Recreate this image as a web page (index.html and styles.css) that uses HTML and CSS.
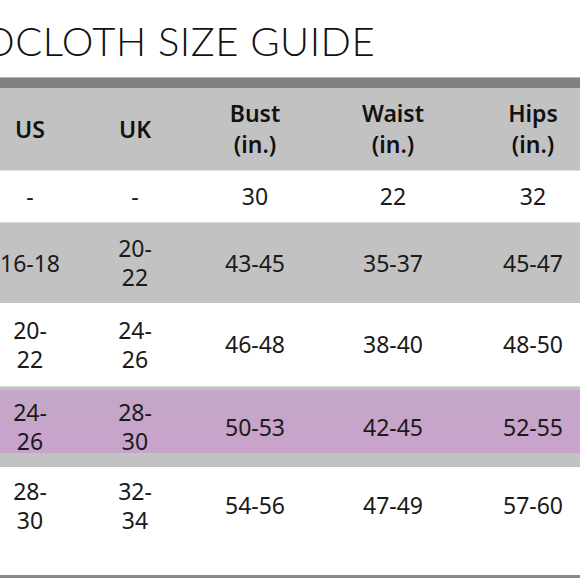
FILE: index.html
```html
<!DOCTYPE html>
<html>
<head>
<meta charset="utf-8">
<link rel="stylesheet" href="styles.css">
</head>
<body>
<div class="page">
  <header class="title-area">
    <h1 class="title">OCLOTH SIZE GUIDE</h1>
  </header>
  <div class="topbar"></div>
  <div class="chart">
    <div class="row head">
      <div class="cell">US</div>
      <div class="cell">UK</div>
      <div class="cell">Bust<br>(in.)</div>
      <div class="cell">Waist<br>(in.)</div>
      <div class="cell">Hips<br>(in.)</div>
    </div>
    <div class="row white short">
      <div class="cell">-</div>
      <div class="cell">-</div>
      <div class="cell">30</div>
      <div class="cell">22</div>
      <div class="cell">32</div>
    </div>
    <div class="row gray">
      <div class="cell">16-18</div>
      <div class="cell">20-<br>22</div>
      <div class="cell">43-45</div>
      <div class="cell">35-37</div>
      <div class="cell">45-47</div>
    </div>
    <div class="row white tall">
      <div class="cell">20-<br>22</div>
      <div class="cell">24-<br>26</div>
      <div class="cell">46-48</div>
      <div class="cell">38-40</div>
      <div class="cell">48-50</div>
    </div>
    <div class="row gray marked">
      <span class="mark mark-top"></span>
      <span class="mark mark-bottom"></span>
      <div class="cell">24-<br>26</div>
      <div class="cell">28-<br>30</div>
      <div class="cell">50-53</div>
      <div class="cell">42-45</div>
      <div class="cell">52-55</div>
    </div>
    <div class="row white last">
      <div class="cell">28-<br>30</div>
      <div class="cell">32-<br>34</div>
      <div class="cell">54-56</div>
      <div class="cell">47-49</div>
      <div class="cell">57-60</div>
    </div>
  </div>
</div>
</body>
</html>
```
FILE: styles.css
```css
html, body {
  margin: 0;
  padding: 0;
  background: #ffffff;
}

.page {
  width: 580px;
  height: 580px;
  overflow: hidden;
  position: relative;
}

.title-area {
  height: 77px;
  overflow: hidden;
}

.title {
  margin: 0;
  padding-top: 18px;
  margin-left: -17px;
  font-family: "Lato", "DejaVu Sans", sans-serif;
  font-weight: 300;
  font-size: 40px;
  line-height: 46px;
  color: #111111;
  white-space: nowrap;
  letter-spacing: 0.5px;
}

.topbar {
  height: 10px;
  background: #808080;
  border-top: 1px solid #b8b8b8;
}

.chart {
  margin-left: -30px;
  width: 640px;
  font-family: "Noto Sans", "Open Sans", sans-serif;
  font-size: 23px;
  line-height: 29px;
  color: #1a1a1a;
}

.row {
  display: grid;
  grid-template-columns: 120px 90px 150px 126px 154px;
  align-items: center;
  height: 81px;
  position: relative;
  box-sizing: border-box;
}

.cell {
  text-align: center;
  position: relative;
  z-index: 1;
}

.head {
  height: 82px;
  background: #c2c2c2;
  font-weight: 600;
  color: #111111;
  font-size: 23px;
  line-height: 31px;
}

.white {
  background: #ffffff;
}

.short {
  height: 52px;
  border-top: 1px solid #e2e2e2;
}

.gray {
  background: #c2c2c2;
  border-top: 1px solid #dadada;
  height: 81px;
}

.tall {
  height: 83px;
}

.last {
  height: 111px;
  padding-bottom: 31px;
  border-bottom: 3px solid #8a8a8a;
}

.mark {
  position: absolute;
  left: 0;
  z-index: 0;
}

.mark-top {
  top: 3px;
  height: 33px;
  width: 633px;
  background: #c6a6c8;
}

.mark-bottom {
  top: 36px;
  height: 30px;
  width: 640px;
  background: #c8a3cb;
}
```
